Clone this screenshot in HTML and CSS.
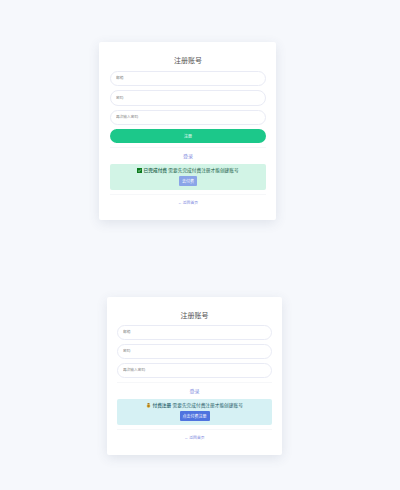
FILE: index.html
```html
<!DOCTYPE html>
<html lang="zh-CN">
<head>
  <meta charset="UTF-8">
  <meta name="viewport" content="width=device-width, initial-scale=1.0">
  <title>注册账号</title>
  <link rel="stylesheet" href="styles.css">
</head>
<body>
  <div class="card card-first">
    <h1>注册账号</h1>
    <form class="form">
      <input type="text" placeholder="邮箱">
      <input type="password" placeholder="密码">
      <input type="password" placeholder="再次输入密码">
      <button type="button" class="submit-btn">注册</button>
    </form>
    <div class="login-link">登录</div>
    <div class="notice notice-green">
      <p>
        <svg class="notice-icon" viewBox="0 0 10 10">
          <rect width="10" height="10" fill="#0b7a1e"/>
          <path d="M2.5 5.5 L4.3 7.2 L7.6 3" fill="none" stroke="#d8f5d8" stroke-width="1.4"/>
        </svg>
        <b>已完成付费</b> 需要先完成付费注册才能创建账号
      </p>
      <button type="button" class="pay-btn pay-btn-light">去付费</button>
    </div>
    <div class="back-link">← 返回首页</div>
  </div>

  <div class="card card-second">
    <h1>注册账号</h1>
    <form class="form">
      <input type="text" placeholder="邮箱">
      <input type="password" placeholder="密码">
      <input type="password" placeholder="再次输入密码">
    </form>
    <div class="login-link">登录</div>
    <div class="notice notice-blue">
      <p>
        <svg class="notice-icon" viewBox="0 0 10 10">
          <path d="M3 0 H7 V3 H3 Z" fill="#a8792a"/>
          <circle cx="5" cy="6" r="3.6" fill="#d9a52e"/>
          <circle cx="5" cy="6" r="1.6" fill="#8f6a1e"/>
        </svg>
        <b>付费注册</b> 需要先完成付费注册才能创建账号
      </p>
      <button type="button" class="pay-btn">点击付费注册</button>
    </div>
    <div class="back-link">← 返回首页</div>
  </div>
</body>
</html>
```

FILE: styles.css
```css
* {
  box-sizing: border-box;
}

body {
  margin: 0;
  min-height: 490px;
  padding-top: 42px;
  background-color: #f6f8fc;
  color: #444;
  font-family: "Liberation Sans", "Noto Sans CJK SC", sans-serif;
  font-size: 5px;
}

.card {
  background-color: #fff;
  border-radius: 2px;
  box-shadow: 0 3px 12px rgba(60, 70, 110, 0.12);
}

.card-first {
  width: 177px;
  height: 178px;
  margin-left: 99px;
  padding: 14px 10px 0 11px;
}

.card-second {
  width: 175px;
  height: 158px;
  margin-top: 77px;
  margin-left: 107px;
  padding: 13.5px 10px 0;
}

h1 {
  margin: 0 0 5.5px;
  font-size: 7px;
  line-height: 9px;
  font-weight: 400;
  text-align: center;
  color: #555;
}

.card-second h1 {
  margin-bottom: 5px;
}

.form {
  display: flex;
  flex-direction: column;
  gap: 4px;
  padding-bottom: 4px;
  border-bottom: 1px solid #f6f7f9;
}

.card-second .form {
  gap: 3.5px;
}

.form input {
  height: 15.5px;
  padding: 0 5px;
  border: 1px solid #e9ebf5;
  border-radius: 8px;
  background-color: #fff;
  font-family: inherit;
  font-size: 3.7px;
}

.form input::placeholder {
  color: #888;
}

.submit-btn {
  height: 14px;
  border: none;
  border-radius: 7px;
  background-color: #1cc88a;
  color: #fff;
  font-family: inherit;
  font-size: 4px;
}

.login-link {
  margin: 4.5px 0 4px;
  line-height: 7px;
  font-size: 5px;
  text-align: center;
  color: #7d8ade;
}

.notice {
  display: flex;
  flex-direction: column;
  align-items: center;
  height: 26px;
  padding-top: 3px;
  border-radius: 2px;
  font-size: 4.7px;
  line-height: 7px;
}

.notice p {
  margin: 0 0 2px;
  white-space: nowrap;
}

.notice b {
  font-weight: 500;
}

.notice-green {
  background-color: #d2f4e6;
  color: #1b5e48;
}

.notice-blue {
  background-color: #d6f1f4;
  color: #1f5c68;
}

.notice-icon {
  width: 5px;
  height: 5px;
  vertical-align: -1px;
}

.pay-btn {
  height: 10px;
  padding: 0 3px;
  border: none;
  border-radius: 1px;
  background-color: #4e73df;
  color: #fff;
  font-family: inherit;
  font-size: 4px;
}

.pay-btn-light {
  background-color: #8aa4e8;
}

.back-link {
  margin-top: 4px;
  padding-top: 5px;
  border-top: 1px solid #f6f7f9;
  line-height: 7px;
  font-size: 3.8px;
  text-align: center;
  color: #7d8ade;
}
```
